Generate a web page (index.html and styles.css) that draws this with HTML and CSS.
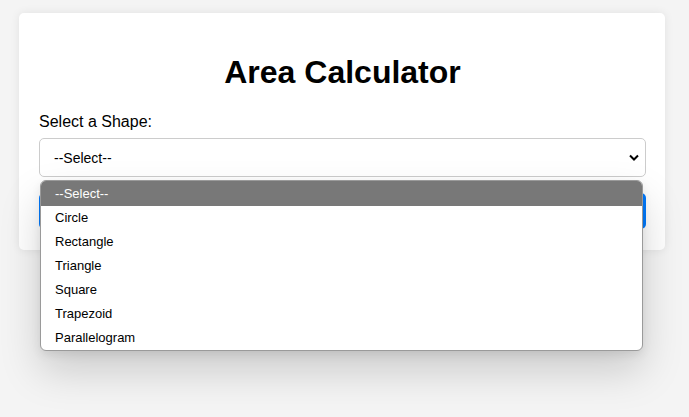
FILE: index.html
```html
<!DOCTYPE html>
<html lang="en">
<head>
<meta charset="utf-8">
<title>Area Calculator</title>
<link rel="stylesheet" href="styles.css">
</head>
<body>
  <div class="card">
    <h1 class="title">Area Calculator</h1>
    <label class="label" for="shape">Select a Shape:</label>
    <div class="select-wrap">
      <select id="shape" class="select">
        <option>--Select--</option>
        <option>Circle</option>
        <option>Rectangle</option>
        <option>Triangle</option>
        <option>Square</option>
        <option>Trapezoid</option>
        <option>Parallelogram</option>
      </select>
      <div class="dropdown">
        <div class="option active">--Select--</div>
        <div class="option">Circle</div>
        <div class="option">Rectangle</div>
        <div class="option">Triangle</div>
        <div class="option">Square</div>
        <div class="option">Trapezoid</div>
        <div class="option">Parallelogram</div>
      </div>
    </div>
    <button class="btn">Calculate</button>
  </div>
</body>
</html>
```

FILE: styles.css
```css
html, body {
  margin: 0;
  padding: 0;
}
html {
  height: 100%;
}
body {
  background: #f4f4f4;
  font-family: "Liberation Sans", Arial, sans-serif;
  color: #000;
  padding: 13px 24px 0 19px;
  min-height: 100%;
  box-sizing: border-box;
}
.card {
  background: #fff;
  border-radius: 5px;
  box-shadow: 0 0 10px rgba(0, 0, 0, 0.08);
  padding: 20px 19px 21px 20px;
  display: flex;
  flex-direction: column;
}
.title {
  font-size: 32px;
  font-weight: bold;
  text-align: center;
  margin: 21px 0 21px;
  line-height: 37px;
}
.label {
  font-size: 16px;
  line-height: 18px;
  margin-bottom: 7px;
  margin-top: 1px;
}
.select-wrap {
  position: relative;
}
.select {
  appearance: none;
  -webkit-appearance: none;
  width: 100%;
  height: 39px;
  box-sizing: border-box;
  border: 1px solid #ccc;
  border-radius: 5px;
  background: #fff url("data:image/svg+xml;utf8,<svg xmlns='http://www.w3.org/2000/svg' width='10' height='7' viewBox='0 0 10 7'><path d='M1 1.5 L5 5.5 L9 1.5' fill='none' stroke='black' stroke-width='2'/></svg>") no-repeat right 6px center;
  font-family: "Liberation Sans", Arial, sans-serif;
  font-size: 14px;
  color: #000;
  padding: 0 10px 0 14px;
  display: block;
}
.dropdown {
  position: absolute;
  left: 1px;
  top: 42px;
  width: 603px;
  box-sizing: border-box;
  background: #fff;
  border: 1px solid #9a9a9a;
  border-radius: 6px;
  overflow: hidden;
  box-shadow: 0 20px 40px rgba(0, 0, 0, 0.17), 0 4px 10px rgba(0, 0, 0, 0.08);
  z-index: 2;
  font-size: 13px;
}
.option {
  height: 24px;
  line-height: 24px;
  padding-left: 14px;
  color: #000;
}
.option.active {
  background: #787878;
  color: #fff;
  height: 25px;
  line-height: 25px;
}
.btn {
  margin-top: 16px;
  height: 36px;
  width: 100%;
  border: none;
  border-radius: 5px;
  background: #007bff;
  color: #fff;
  font-family: "Liberation Sans", Arial, sans-serif;
  font-size: 16px;
}
```
